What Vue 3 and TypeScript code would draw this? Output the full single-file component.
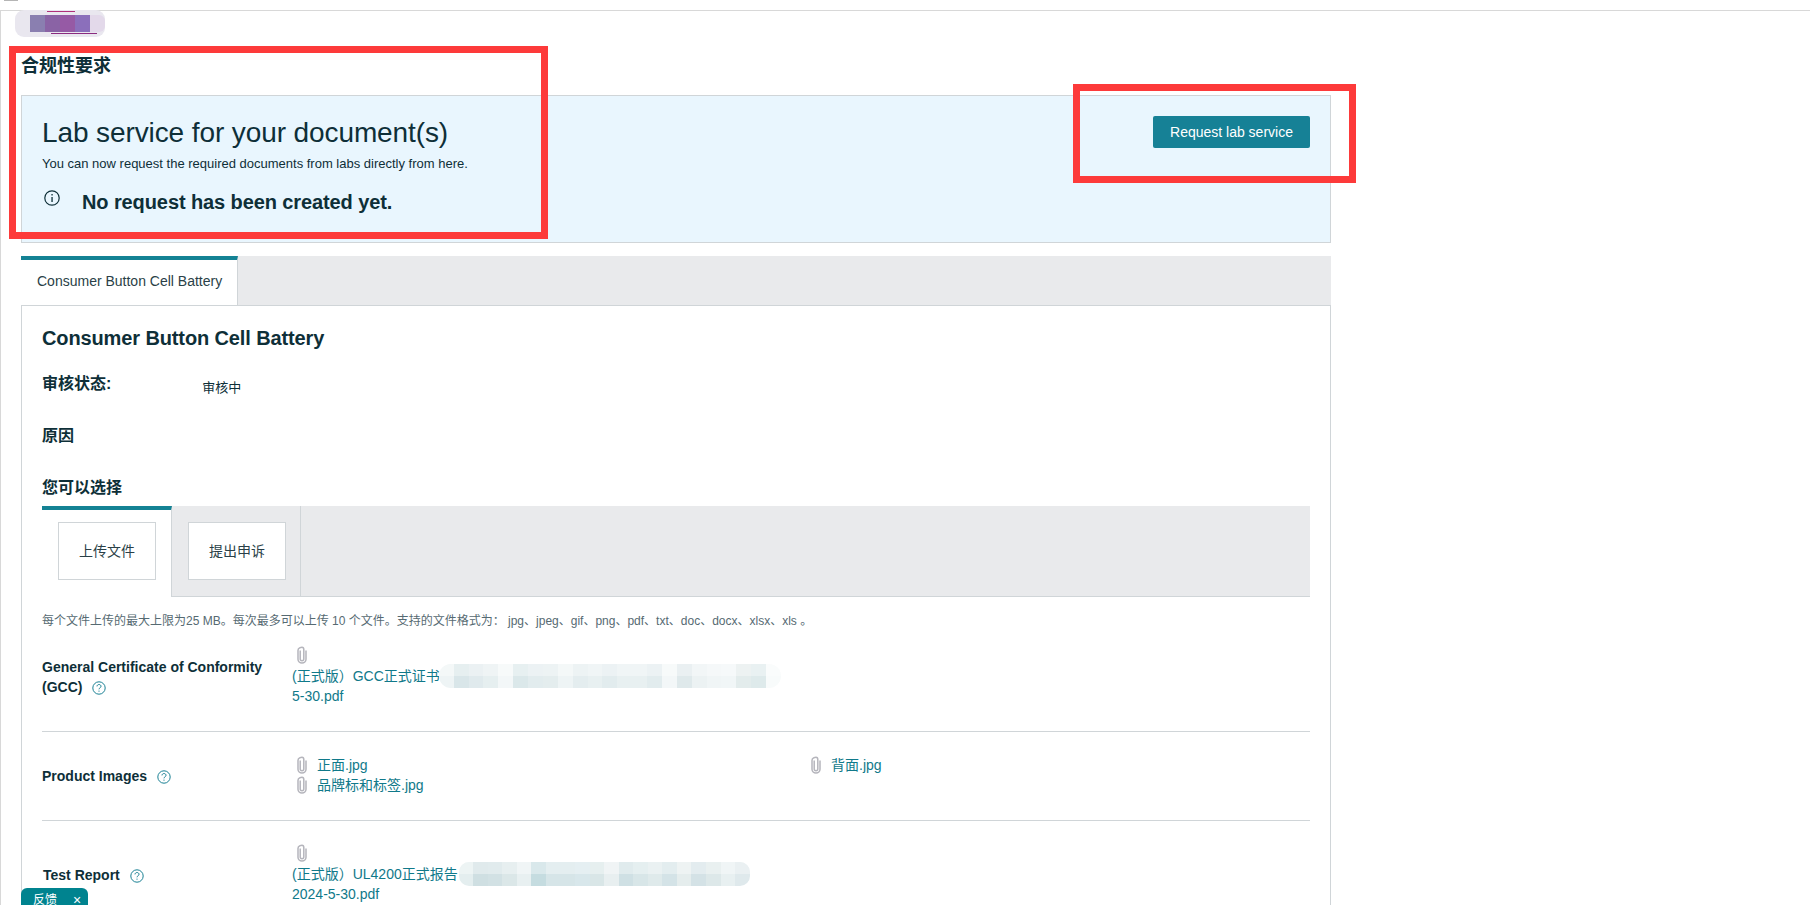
<script setup lang="ts">
interface FileItem { name: string }
const images: FileItem[] = [{ name: '正面.jpg' }, { name: '背面.jpg' }, { name: '品牌标和标签.jpg' }]
const blurOne = ['#eef4f5','#d9e6e9','#e0eaed','#e6eff0','#f3f7f8','#dbe8ea','#e2ecee','#e4edee','#eef4f5','#e4edef','#e8f0f1','#e2ecee','#e8f0f1','#e8f0f1','#e2ecee','#f3f7f8','#dfe9eb','#ecf2f3','#f0f5f6','#f1f6f7','#e3ecec','#deeaeb','#f8fbfb']
const blurTwo = ['#e4eeef','#cfdfe2','#d2e1e4','#dbe7e8','#e8f0f1','#c5dce0','#d6e5e8','#d6e5e8','#d8e7eb','#d9e6e7','#e8eff0','#cfe0e4','#d8e6e8','#dfeaeb','#d4e3e7','#e5eded','#d4e2e6','#dde8e9','#e8f0f1','#dfe9ec']
</script>

<template>
  <div class="page">
    <div class="topbar"><span class="topbar-mark"></span></div>

    <main class="main">
      <h1 class="heading">合规性要求</h1>

      <section class="banner">
        <div>
          <h2 class="banner-title">Lab service for your document(s)</h2>
          <p class="banner-sub">You can now request the required documents from labs directly from here.</p>
          <div class="banner-note">
            <svg class="info" viewBox="0 0 16 16" width="16" height="16">
              <circle cx="8" cy="8" r="7.2" fill="none" stroke="#0e2f38" stroke-width="1.2" />
              <rect x="7.4" y="7" width="1.3" height="5" fill="#0e2f38" />
              <rect x="7.4" y="4" width="1.3" height="1.5" fill="#0e2f38" />
            </svg>
            <strong>No request has been created yet.</strong>
          </div>
        </div>
        <button class="primary">Request lab service</button>
      </section>

      <div class="tabstrip">
        <div class="tab-active">Consumer Button Cell Battery</div>
      </div>

      <section class="panel">
        <h3 class="panel-title">Consumer Button Cell Battery</h3>
        <div class="status-row">
          <span class="label-big">审核状态:</span>
          <span class="status-value">审核中</span>
        </div>
        <div class="label-big reason">原因</div>
        <div class="label-big choose">您可以选择</div>

        <div class="subtabs">
          <div class="subtab subtab-active"><span class="subtab-box">上传文件</span></div>
          <div class="subtab"><span class="subtab-box">提出申诉</span></div>
        </div>

        <p class="note">每个文件上传的最大上限为25 MB。每次最多可以上传 10 个文件。支持的文件格式为： jpg、jpeg、gif、png、pdf、txt、doc、docx、xlsx、xls 。</p>

        <div class="row row-first">
          <div class="row-label">General Certificate of Conformity<br />(GCC)<svg class="help" viewBox="0 0 14 14" width="14" height="14"><circle cx="7" cy="7" r="6.2" fill="none" stroke="#1a8194" stroke-width="1" /><path d="M5 5.4c0-1.2 1-1.9 2-1.9s2 .7 2 1.8c0 1.5-2 1.5-2 3" fill="none" stroke="#1a8194" stroke-width="1" /><rect x="6.5" y="9.6" width="1" height="1.1" fill="#1a8194" /></svg></div>
          <div class="row-value">
            <svg class="clip clip-solo" viewBox="0 0 10 18" width="10" height="18"><path d="M3.2 4.5v8.6c0 1 .8 1.7 1.8 1.7s1.8-.7 1.8-1.7V3.6C6.800 2.200 6 1.200 5 1.200S1 2.200 1 4.400v8.800c0 2.200 1.800 3.800 4 3.800s4-1.600 4-3.800V4.500" fill="none" stroke="#b5b5bc" stroke-width="1.500" /></svg>
            <div class="line">(正式版）GCC正式证书<span class="blur blur-one"><i v-for="(c, i) in blurOne" :key="i" :style="{ background: c }"></i></span></div>
            <div class="line">5-30.pdf</div>
          </div>
        </div>

        <div class="row">
          <div class="row-label">Product Images<svg class="help" viewBox="0 0 14 14" width="14" height="14"><circle cx="7" cy="7" r="6.2" fill="none" stroke="#1a8194" stroke-width="1" /><path d="M5 5.4c0-1.2 1-1.9 2-1.9s2 .7 2 1.8c0 1.5-2 1.5-2 3" fill="none" stroke="#1a8194" stroke-width="1" /><rect x="6.5" y="9.6" width="1" height="1.1" fill="#1a8194" /></svg></div>
          <div class="row-value files">
            <div v-for="f in images" :key="f.name" class="file">
              <svg class="clip" viewBox="0 0 10 18" width="10" height="18"><path d="M3.2 4.5v8.6c0 1 .8 1.7 1.8 1.7s1.8-.7 1.8-1.7V3.6C6.800 2.200 6 1.200 5 1.200S1 2.200 1 4.400v8.800c0 2.200 1.800 3.800 4 3.800s4-1.600 4-3.800V4.500" fill="none" stroke="#b5b5bc" stroke-width="1.500" /></svg>
              <span>{{ f.name }}</span>
            </div>
          </div>
        </div>

        <div class="row row-last">
          <div class="row-label row-label-test">Test Report<svg class="help" viewBox="0 0 14 14" width="14" height="14"><circle cx="7" cy="7" r="6.2" fill="none" stroke="#1a8194" stroke-width="1" /><path d="M5 5.4c0-1.2 1-1.9 2-1.900s2 .7 2 1.800c0 1.500-2 1.500-2 3" fill="none" stroke="#1a8194" stroke-width="1" /><rect x="6.500" y="9.600" width="1" height="1.100" fill="#1a8194" /></svg></div>
          <div class="row-value">
            <svg class="clip clip-solo" viewBox="0 0 10 18" width="10" height="18"><path d="M3.2 4.5v8.6c0 1 .8 1.7 1.8 1.7s1.8-.7 1.8-1.7V3.6C6.800 2.200 6 1.200 5 1.200S1 2.200 1 4.400v8.800c0 2.200 1.800 3.800 4 3.800s4-1.600 4-3.800V4.500" fill="none" stroke="#b5b5bc" stroke-width="1.500" /></svg>
            <div class="line">(正式版）UL4200正式报告<span class="blur blur-two"><i v-for="(c, i) in blurTwo" :key="i" :style="{ background: c }"></i></span></div>
            <div class="line">2024-5-30.pdf</div>
          </div>
        </div>
      </section>
    </main>

    <div class="logo-blur">
      <i class="lb a"></i><i class="lb b"></i><i class="lb c"></i><i class="lb d"></i><i class="lb e"></i>
      <i class="logo-line logo-line-top"></i>
      <i class="logo-line logo-line-bottom"></i>
    </div>

    <div class="feedback"><span>反馈</span><span class="close">×</span></div>

    <div class="mark mark-left"></div>
    <div class="mark mark-right"></div>
  </div>
</template>

<style scoped>
.page {
  position: relative;
  width: 1810px;
  height: 905px;
  overflow: hidden;
  background: #fff;
  color: #0e2f38;
  font-family: "Liberation Sans", "Noto Sans CJK SC", sans-serif;
}
.topbar {
  height: 10px;
  border-bottom: 1px solid #d8d8d8;
  position: relative;
}
.topbar-mark {
  position: absolute;
  left: 4px;
  top: 0;
  width: 14px;
  height: 1px;
  background: #b5b5b5;
}
.main {
  height: 894px;
  box-sizing: border-box;
  padding: 40px 0 0 21px;
  border-left: 1px solid #d8d8d8;
  width: 1331px;
}
.main > * { margin-left: -1px; }
.heading {
  margin: 0 0 14px -1px;
  font-size: 18px;
  line-height: 30px;
  font-weight: 700;
  color: #0e2f38;
}
.banner {
  height: 148px;
  box-sizing: border-box;
  padding: 20px;
  background: #e9f6fe;
  border: 1px solid #d0d5d8;
  display: flex;
  justify-content: space-between;
  align-items: flex-start;
}
.banner-title {
  margin: 1px 0 0;
  font-size: 28px;
  line-height: 32px;
  font-weight: 400;
  letter-spacing: -.1px;
}
.banner-sub {
  margin: 6px 0 0;
  font-size: 13px;
  line-height: 18px;
}
.banner-note {
  margin-top: 18px;
  display: flex;
  align-items: flex-start;
  height: 24px;
}
.info { margin: -1px 22px 0 2px; flex: none; }
.banner-note strong {
  font-size: 20px;
  line-height: 22px;
  font-weight: 700;
  letter-spacing: -.1px;
}
.primary {
  width: 157px;
  height: 32px;
  padding: 0;
  border: 0;
  border-radius: 2px;
  background: #168196;
  color: #fff;
  font-family: inherit;
  font-size: 14px;
}
.tabstrip {
  margin-top: 13px;
  height: 49px;
  background: #e9eaec;
}
.tab-active {
  width: 217px;
  height: 49px;
  box-sizing: border-box;
  background: #fff;
  border-top: 4px solid #148294;
  border-right: 1px solid #d0d5d8;
  padding-left: 16px;
  font-size: 14px;
  line-height: 43px;
  color: #2a3f47;
}
.panel {
  border: 1px solid #d0d5d8;
  padding: 20px 20px 0;
  height: 620px;
  box-sizing: border-box;
}
.panel-title {
  margin: 0;
  font-size: 20px;
  line-height: 24px;
  font-weight: 700;
  letter-spacing: -.12px;
}
.status-row {
  margin-top: 22px;
  display: flex;
  height: 24px;
}
.label-big {
  font-size: 16px;
  line-height: 24px;
  font-weight: 700;
}
.status-value {
  margin-left: 91px;
  font-size: 13px;
  line-height: 32px;
}
.reason { margin-top: 28px; }
.choose { margin-top: 28px; }
.subtabs {
  margin-top: 6px;
  height: 91px;
  box-sizing: border-box;
  display: flex;
  background: #e9eaec;
  border-bottom: 1px solid #d0d5d8;
}
.subtab {
  width: 129px;
  height: 90px;
  box-sizing: border-box;
  padding: 16px 0 0 16px;
  border-right: 1px solid #d0d5d8;
}
.subtab-active {
  width: 130px;
  height: 91px;
  background: #fff;
  border-top: 4px solid #148294;
  padding-top: 12px;
}
.subtab-box {
  display: block;
  width: 98px;
  height: 58px;
  box-sizing: border-box;
  background: #fff;
  border: 1px solid #d0d5d8;
  font-size: 14px;
  line-height: 56px;
  text-align: center;
  color: #2a3f47;
}
.note {
  margin: 15px 0 0;
  font-size: 12px;
  line-height: 18px;
  color: #566a72;
}
.row {
  display: flex;
  align-items: center;
  padding: 23px 0 25px;
  border-bottom: 1px solid #d0d5d8;
}
.row-first { padding-top: 16px; }
.row-last { border-bottom: 0; }
.row-label {
  width: 250px;
  flex: none;
  margin-top: 1px;
  font-size: 14px;
  line-height: 20px;
  font-weight: 700;
}
.row-label-test { padding-left: 1px; box-sizing: border-box; }
.help {
  margin-left: 10px;
  vertical-align: -3px;
}
.row-value {
  flex: 1;
  font-size: 14px;
  line-height: 20px;
  color: #10798a;
}
.clip { flex: none; display: block; }
.clip-solo { margin: 0 0 2px 5px; }
.line {
  display: flex;
  align-items: center;
  white-space: nowrap;
  height: 20px;
}
.blur {
  position: relative;
  display: inline-flex;
  height: 24px;
}
.blur::after {
  content: "";
  position: absolute;
  inset: 0 0 50% 0;
  background: rgba(255, 255, 255, .35);
}
.blur i { flex: 1; }
.blur-one { width: 342px; margin-left: -1px; border-radius: 12px; overflow: hidden; }
.blur-two { width: 291px; margin-left: 1px; border-radius: 10px; overflow: hidden; }
.files {
  display: grid;
  grid-template-columns: 514px 1fr;
}
.file {
  display: flex;
  align-items: center;
  gap: 10px;
  padding-left: 5px;
  height: 20px;
}
.logo-blur {
  position: absolute;
  left: 15px;
  top: 10px;
  width: 90px;
  height: 27px;
  background: #e9e7ef;
  border-radius: 9px;
  display: flex;
  align-items: center;
  padding-left: 15px;
  box-sizing: border-box;
}
.lb { display: block; width: 15px; height: 17px; }
.a { background: #8a7fb0; }
.b { background: #8a63a5; }
.c { background: #965aa5; }
.d { background: #8b6fbb; }
.e { background: #e3d9ea; border-radius: 0 6px 6px 0; }
.logo-line { position: absolute; height: 1px; background: #b0307a; }
.logo-line-top { left: 32px; top: 1px; width: 28px; }
.logo-line-bottom { left: 36px; top: 23px; width: 46px; background: #8a2a80; }
.feedback {
  position: absolute;
  left: 21px;
  top: 888px;
  width: 67px;
  height: 24px;
  box-sizing: border-box;
  background: #00838f;
  border-radius: 6px 6px 0 0;
  color: #fff;
  font-size: 12px;
  line-height: 24px;
  padding-left: 12px;
  display: flex;
  gap: 16px;
}
.close { font-size: 14px; }
.mark {
  position: absolute;
  border: 7px solid #fd3a3a;
  box-sizing: border-box;
  pointer-events: none;
}
.mark-left { left: 9px; top: 46px; width: 539px; height: 193px; }
.mark-right { left: 1073px; top: 84px; width: 283px; height: 99px; }
</style>

<style>
html, body { margin: 0; background: #fff; }
</style>
